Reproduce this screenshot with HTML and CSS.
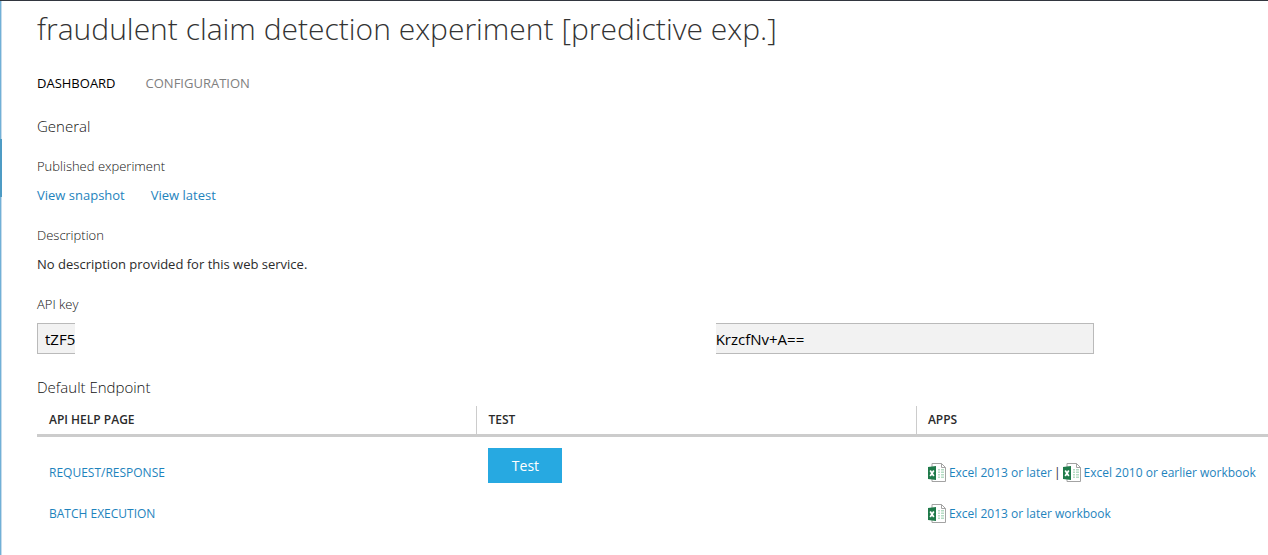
FILE: index.html
```
<!DOCTYPE html>
<html lang="en">
<head>
<meta charset="utf-8">
<title>Web service dashboard</title>
<link rel="stylesheet" href="styles.css">
</head>
<body>
<svg class="defs" aria-hidden="true">
  <symbol id="excel" viewBox="0 0 18 19">
    <path d="M4 .5h9.500l4 4v14h-13.500z" fill="#fff" stroke="#a3a3a3"/>
    <path d="M13.5 .5v4h4" fill="none" stroke="#a3a3a3"/>
    <path d="M10 6h2v1.5h-2zM13 6h3v1.5h-3zM10 8.500h2v1.5h-2zM13 8.500h3v1.5h-3zM10 11h2v1.5h-2zM13 11h3v1.500h-3zM10 13.500h2v1.500h-2zM13 13.500h3v1.500h-3z" fill="#b5dcc4"/>
    <path d="M0 4l8-1v14l-8-1z" fill="#1f7a4a"/>
    <path d="M2.200 7.500l3.600 5.500M5.800 7.500l-3.600 5.500" stroke="#fff" stroke-width="1.700"/>
  </symbol>
</svg>
<div class="page">
  <div class="rail"><div class="rail-thumb"></div></div>
  <main class="content">
    <h1 class="title">fraudulent claim detection experiment [predictive exp.]</h1>
    <nav class="tabs">
      <a class="tab tab-active" href="#dashboard">DASHBOARD</a>
      <a class="tab" href="#configuration">CONFIGURATION</a>
    </nav>
    <h2 class="section">General</h2>
    <h3 class="label">Published experiment</h3>
    <p class="value links"><a href="#snapshot">View snapshot</a><a href="#latest">View latest</a></p>
    <h3 class="label">Description</h3>
    <p class="value">No description provided for this web service.</p>
    <label class="label" for="key">API key</label>
    <div class="key">
      <input class="key-start" id="key" type="text" value="tZF5" readonly>
      <input class="key-end" type="text" value="KrzcfNv+A==" aria-label="API key, last part" readonly>
    </div>
    <h2 class="section">Default Endpoint</h2>
    <table class="endpoints">
      <thead>
        <tr><th class="col">API HELP PAGE</th><th class="col">TEST</th><th>APPS</th></tr>
      </thead>
      <tbody>
        <tr class="row-first">
          <td><a href="#request">REQUEST/RESPONSE</a></td>
          <td class="cell-test"><button class="test" type="button">Test</button></td>
          <td><div class="apps"><a class="app" href="#x2013"><svg class="icon"><use href="#excel"/></svg>Excel 2013 or later</a><span>|</span><a class="app" href="#x2010"><svg class="icon"><use href="#excel"/></svg>Excel 2010 or earlier workbook</a></div></td>
        </tr>
        <tr>
          <td><a href="#batch">BATCH EXECUTION</a></td>
          <td></td>
          <td><div class="apps"><a class="app" href="#b2013"><svg class="icon"><use href="#excel"/></svg>Excel 2013 or later workbook</a></div></td>
        </tr>
      </tbody>
    </table>
  </main>
</div>
</body>
</html>
```
FILE: styles.css
```
* { box-sizing: border-box; }
body {
  margin: 0;
  background: #fff;
  color: #2b2b2b;
  font-family: "Open Sans", "Noto Sans", sans-serif;
  font-size: 13px;
  line-height: 20px;
}
a { color: #1e83bd; text-decoration: none; }
.defs { position: absolute; width: 0; height: 0; }
.page {
  display: flex;
  min-height: 100vh;
  border-top: 1px solid #32363f;
}
.rail {
  flex: none;
  width: 2px;
  padding-top: 138px;
  background: linear-gradient(to right, #71b0d7 1px, #c6dceb 1px);
}
.rail-thumb { height: 58px; background: #4d9bc4; }
.content { flex: 1; min-width: 0; padding-left: 35px; }
.title {
  margin: 0;
  padding-top: 8px;
  font-size: 30px;
  font-weight: 300;
  line-height: 40px;
  color: #333;
}
.tabs { display: flex; gap: 30px; margin-top: 24px; }
.tab { color: #808080; }
.tab-active { color: #000; }
.section {
  margin: 23px 0 0;
  font-size: 15px;
  font-weight: 300;
  line-height: 20px;
  color: #111;
}
.label {
  display: block;
  margin: 20px 0 0;
  font-size: 13px;
  font-weight: 300;
  line-height: 20px;
  color: #111;
}
.value { margin: 9px 0 0; }
.links { display: flex; gap: 26px; }
.key {
  display: flex;
  justify-content: space-between;
  width: calc(86% - 2px);
  margin-top: 9px;
}
.key input {
  height: 31px;
  border: 1px solid #bababa;
  border-radius: 0;
  background: #f2f2f2;
  color: #000;
  font: 15px "Open Sans", "Noto Sans", sans-serif;
  outline: none;
}
.key .key-start { width: 38px; padding: 0 0 0 7px; border-right: 0; }
.key .key-end { width: 378px; padding: 0; border-left: 0; }
.endpoints {
  width: 100%;
  margin-top: 9px;
  border-collapse: separate;
  border-spacing: 0;
  table-layout: fixed;
}
.endpoints th {
  height: 31px;
  padding: 0 0 0 12px;
  border-bottom: 3px solid #ccc;
  font-size: 12px;
  font-weight: 600;
  line-height: 28px;
  text-align: left;
}
.endpoints .col { width: 35.7%; }
.endpoints th + th { background: linear-gradient(#ccc, #ccc) left / 1px 100% no-repeat; }
.endpoints td {
  height: 41px;
  padding: 0 0 0 12px;
  font-size: 12px;
  white-space: nowrap;
}
.endpoints .row-first td { height: 56px; padding-top: 15px; }
.endpoints .row-first .cell-test { padding-top: 0; }
.test {
  display: block;
  width: 74px;
  height: 35px;
  padding: 0;
  border: 0;
  background: #27a9e1;
  color: #fff;
  font: 14px "Open Sans", "Noto Sans", sans-serif;
}
.apps { display: flex; gap: 2px; }
.app { display: flex; align-items: center; gap: 3px; }
.icon { flex: none; width: 18px; height: 19px; }
```
